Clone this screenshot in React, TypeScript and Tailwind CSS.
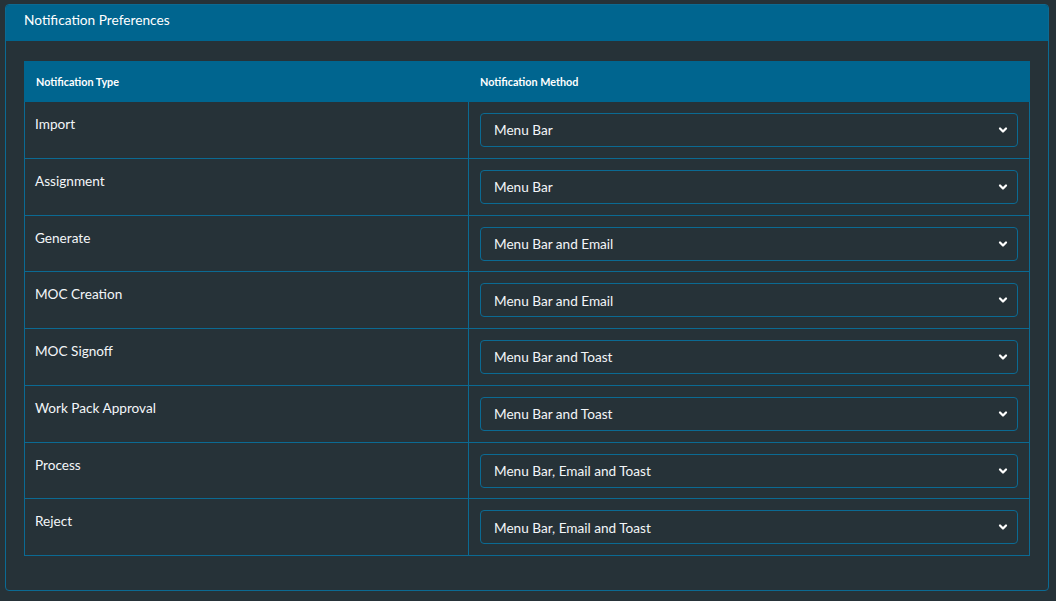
import { ChevronDown } from "lucide-react";

const rows = [
  { type: "Import", method: "Menu Bar" },
  { type: "Assignment", method: "Menu Bar" },
  { type: "Generate", method: "Menu Bar and Email" },
  { type: "MOC Creation", method: "Menu Bar and Email" },
  { type: "MOC Signoff", method: "Menu Bar and Toast" },
  { type: "Work Pack Approval", method: "Menu Bar and Toast" },
  { type: "Process", method: "Menu Bar, Email and Toast" },
  { type: "Reject", method: "Menu Bar, Email and Toast" },
];

const options = [
  "Menu Bar",
  "Menu Bar and Email",
  "Menu Bar and Toast",
  "Menu Bar, Email and Toast",
];

function MethodSelect({ value }: { value: string }) {
  return (
    <div className="relative">
      <select
        defaultValue={value}
        className="block h-[34px] w-full appearance-none rounded-[4px] border border-[#0b6a93] bg-[#263238] pl-[13px] pr-8 pt-[1px] text-[13.6px] text-[#f3f6f8] outline-none"
      >
        {options.map((o) => (
          <option key={o} value={o}>
            {o}
          </option>
        ))}
      </select>
      <ChevronDown
        className="pointer-events-none absolute right-[9px] top-1/2 h-[12px] w-[12px] -translate-y-1/2 text-white"
        strokeWidth={4.5}
      />
    </div>
  );
}

export default function App() {
  return (
    <div
      className="min-h-screen bg-[#263238] px-[5px] pt-[4px] pb-[10px] text-[#f3f6f8]"
      style={{ fontFamily: "Lato, 'Open Sans', sans-serif" }}
    >
      <div className="w-[1044px] overflow-hidden rounded-[4px] border border-[#0b6a93]">
        {/* Header */}
        <div className="flex h-[36px] items-center bg-[#00658f] px-[18px] pb-[5px] text-[13.7px] text-white">
          Notification Preferences
        </div>

        {/* Table */}
        <div className="px-[18px] pt-[20px] pb-[34px]">
          <table className="w-[1006px] border-collapse text-[13.6px]">
            <thead>
              <tr className="h-[40px] bg-[#00658f]">
                <th className="w-[444px] border border-[#00658f] px-[11px] pt-[2px] text-left text-[10.8px] font-bold text-white">
                  Notification Type
                </th>
                <th className="border border-[#00658f] px-[11px] pt-[2px] text-left text-[10.8px] font-bold text-white">
                  Notification Method
                </th>
              </tr>
            </thead>
            <tbody>
              {rows.map((r) => (
                <tr key={r.type} className="h-[56.75px]">
                  <td className="border border-[#0b6a93] px-[10px] pt-[12px] pb-[10px] align-top leading-[20px]">
                    {r.type}
                  </td>
                  <td className="border border-[#0b6a93] px-[11px] pt-[11px] pb-[10px] align-top">
                    <MethodSelect value={r.method} />
                  </td>
                </tr>
              ))}
            </tbody>
          </table>
        </div>
      </div>
    </div>
  );
}
